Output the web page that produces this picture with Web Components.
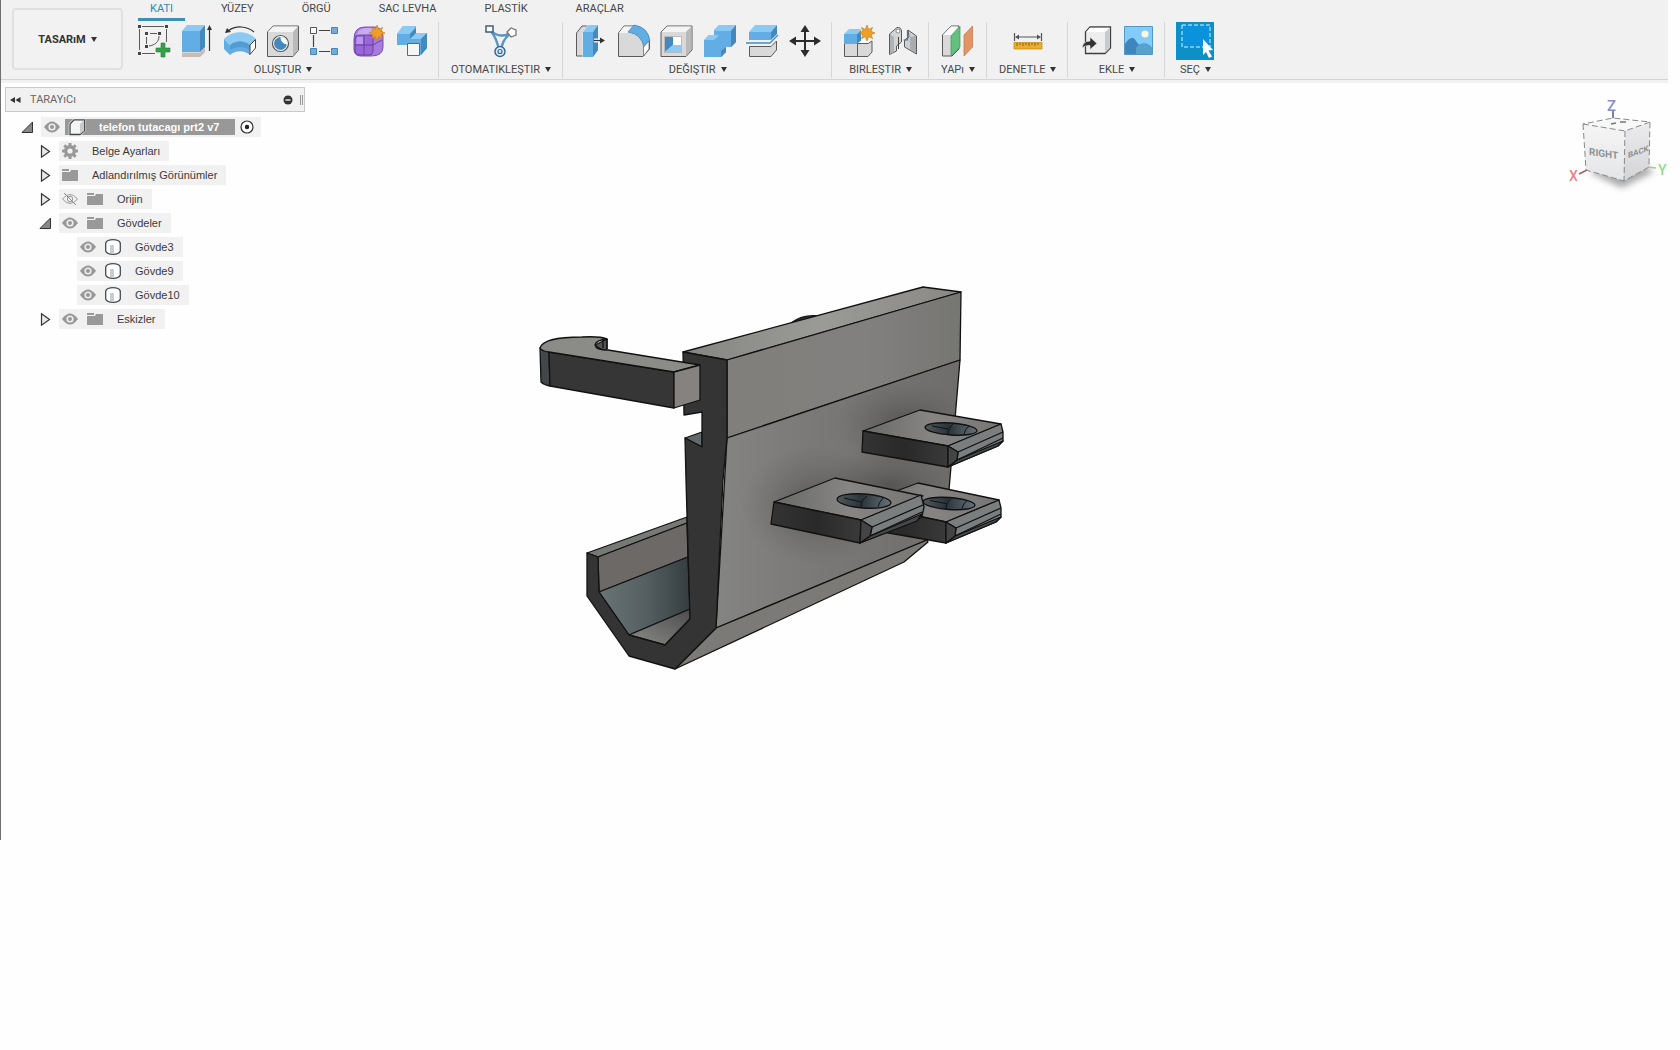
<!DOCTYPE html>
<html lang="tr">
<head>
<meta charset="utf-8">
<title>telefon tutacagı prt2 v7</title>
<style>
body{margin:0;background:#fefefe;color:#3c3c3c;font-family:Roboto,"Liberation Sans",sans-serif;font-size:11px}
</style>
</head>
<body>
<design-app></design-app>
<script>
const define=(name,html,setup)=>customElements.define(name,class extends HTMLElement{
  connectedCallback(){
    if(this.shadowRoot)return;
    const t=document.createElement('template');
    t.innerHTML=typeof html==='function'?html(this):html;
    this.attachShadow({mode:'open'}).append(t.content.cloneNode(true));
    if(setup)setup(this);
  }
});

/* tool icons, drawn on a 32 x 32 grid */
const B='#62aee4',BL='#8ccaf3',BD='#4389bd',G='#d9d9d9',GL='#f4f4f4',GD='#b9b9b9',K='#5b5b5b';
const star='<path d="M0-8 1.7-3.6 5.6-5.6 4-1.7 8 0 4 1.7 5.6 5.6 1.7 3.6 0 8-1.7 3.6-5.6 5.6-4 1.7-8 0-4-1.7-5.6-5.6-1.7-3.6Z" fill="#eda025" stroke="#c7791a" stroke-width=".6"/>';
const ICONS={
sketch:`<g fill="none" stroke="${K}" stroke-width="1"><path d="M4 1.5H26M1.5 4V25M28.5 4V17M4 28.5H17M12 8.5H19M8.5 12V19M21 11C21 17 17 20 11 21"/></g><g fill="#444"><path d="M0 0h3v3H0zM27 0h3v3h-3zM0 27h3v3H0zM7 7h3v3H7zM20 7h3v3h-3zM7 20h3v3H7z"/></g><path d="M23 18h4v5h5v4h-5v5h-4v-5h-5v-4h5z" fill="#34a048" stroke="#24813a" stroke-width=".6"/>`,
extrude:`<path d="M1 27v5h18l5-5v-5H1z" fill="${G}"/><path d="M1 28h18l5-5v4l-5 5H1z" fill="#c7bdb7"/><path d="M1 6h18v21H1z" fill="${B}"/><path d="M1 6 6 0h18l-5 6z" fill="${BL}"/><path d="M19 6 24 0v22l-5 5z" fill="${BD}"/><path d="M28.5 4V26" stroke="#333" stroke-width="1.2"/><path d="M28.5 0 31 5h-5z" fill="#333"/>`,
revolve:`<path d="M0 14C8 5 24 5 32 14L26 20C20 15 12 15 6 20Z" fill="${BL}"/><path d="M0 14 6 20V30L0 24ZM6 20C12 15 20 15 26 20V30C20 25 12 25 6 30Z" fill="${B}"/><path d="M6 20C12 15 20 15 26 20V25C20 21 12 21 6 25Z" fill="${BD}" opacity=".5"/><path d="M26 20 31.500 14.500V23L26 29.500Z" fill="#fff" stroke="#444"/><path d="M4 6C12 0 23 1 30 7" fill="none" stroke="#333" stroke-width="1.200"/><path d="M1 8 3 3 7 7Z" fill="#333"/>`,
hole:`<path d="M.5 7 6 1H31.500V25L26 31.500H.5Z" fill="${G}" stroke="${K}"/><path d="M1 7 6 1.500H31L26 7Z" fill="${GL}"/><path d="M26 7 31 1.500V25L26 31Z" fill="${GD}"/><circle cx="13.500" cy="18.500" r="8" fill="#fff" stroke="#555" stroke-width="1.200"/><circle cx="13.500" cy="18.500" r="6.500" fill="${BD}"/><path d="M13.500 12A7 7 0 0 0 20 19.500 6.500 6.500 0 0 0 13.500 12" fill="#fff"/>`,
pattern:`<path d="M9 5.500H20M3.500 10V22M9 26.500H20" stroke="#444" stroke-width="1.200"/><path d="M.5 2.500h6v6h-6z" fill="#fff" stroke="#555"/><g fill="#70ace0" stroke="#4886b2"><path d="M21.500 2.500h6v6h-6zM.5 23.500h6v6h-6zM21.500 23.500h6v6h-6z"/></g>`,
form:`<path d="M1 14Q1 2 12 2H22Q30 3 30 12V22Q30 31 18 31H8Q1 31 1 24Z" fill="#a77be0" stroke="#7b50b4"/><path d="M4 10Q4 4 13 3H22L20 9Q10 9 4 15Z" fill="#c9a9f2"/><rect x="2" y="10" width="18" height="20" rx="4" fill="#9a67db" stroke="#5d3b91" stroke-width=".8"/><path d="M11 10V30M2 20H20L29 15M20 12 28 6" stroke="#5d3b91" stroke-width=".8" fill="none"/><path d="M4 12h6v7H3z" fill="#bb95ee"/><g transform="translate(24 8)">${star}</g>`,
combine:`<path d="M1 9 7 1H20V8H31V23L25 30H12V20H1Z" fill="${B}"/><path d="M1 9 7 1H20L14 9ZM13 14 19 8H31L25 14Z" fill="${BL}"/><path d="M25 14 31 8V23L25 30ZM14 9 20 3V8L14 14Z" fill="${BD}"/><path d="M11.500 18.500h12v12h-12z" fill="#f6f6f6" stroke="#666"/>`,
automate:`<path d="M5 5C12 12 20 12 26 7M6 6C12 14 13 20 14 25M26 8C18 14 17 20 16 25" fill="none" stroke="#5795c2" stroke-width="2.400"/><path d="M1 1h7v6H1z" fill="#fff" stroke="#3f5f78" stroke-width="1.500"/><path d="M22 7 26 3 31 5 31 10 26 12Z" fill="#fff" stroke="#777" stroke-width="1.300"/><circle cx="15" cy="26.500" r="5" fill="#dcebf5" stroke="#386a8e" stroke-width="1.500"/><circle cx="15" cy="26.500" r="2" fill="none" stroke="#386a8e" stroke-width="1.200"/>`,
presspull:`<path d="M2.500 8 8 1H13V31H2.500Z" fill="${G}" stroke="${K}"/><path d="M8.500 7 13.500 0V32H8.500Z" fill="#f1f1f1"/><path d="M9 7H19V32H9Z" fill="${B}"/><path d="M9 7 14 0H24L19 7Z" fill="${BL}"/><path d="M19 7 24 0V25L19 32Z" fill="${BD}"/><path d="M20 15.500H28" stroke="#f1f1f1" stroke-width="4"/><path d="M20 15.500H27" stroke="#333" stroke-width="1.200"/><path d="M26 12.500 31 15.500 26 18.500Z" fill="#333"/>`,
fillet:`<path d="M1.500 8 7 1H16Q31 3 32.500 18V24L26 31.500H1.500Z" fill="${G}" stroke="${K}"/><path d="M2 8 7 1.500H16L11 8Z" fill="${GL}"/><path d="M11 7 17 0Q31 2 33 16L27 23Q25 9 11 7Z" fill="${B}" stroke="#397daf" stroke-width=".7"/><path d="M26.500 22 32 16V24L26.500 31Z" fill="#fff" stroke="${K}" stroke-width=".7"/>`,
shell:`<path d="M1 7 7 1H32V25L26 31.500H1Z" fill="${G}" stroke="${K}"/><path d="M1.500 7 7 1.500H31.500L26 7Z" fill="${GL}"/><path d="M26 7 31.500 1.500V25L26 31Z" fill="${GD}"/><path d="M4.500 11.500h17v16h-17z" fill="#fff" stroke="#888" stroke-width=".5"/><path d="M5 12H13V20L5 27Z" fill="${BD}"/><path d="M13 20H21V27H5Z" fill="${BL}"/>`,
union:`<path d="M1 15 6 10H11V5L16 0H33V17L28 22H23V27L18 32H1Z" fill="${B}"/><path d="M1 15 6 10H16L11 15ZM11 6 16 0H33L28 6Z" fill="${BL}"/><path d="M28 6 33 0V17L28 22ZM18 26 23 22V27L18 32Z" fill="${BD}"/>`,
split:`<path d="M3 7H25V15H3Z" fill="${B}"/><path d="M3 7 9 0H31L25 7Z" fill="${BL}"/><path d="M25 7 31 0V9L25 15Z" fill="${BD}"/><path d="M0 18H24L32 10" fill="none" stroke="#3f8ec6" stroke-width="1.300"/><path d="M3.500 21.500H25L30.500 16V25L25 31.500H3.500Z" fill="${G}" stroke="${K}"/>`,
move:`<path d="M16 4V28M4 16H28" stroke="#2c2c2c" stroke-width="2"/><path d="M16 0 20.500 7h-9zM16 32l4.500-7h-9zM0 16l7-4.500v9zM32 16l-7-4.500v9z" fill="#2c2c2c"/>`,
newcomp:`<path d="M1.500 18.500H14.500V31.500H1.500ZM14.500 18.500H25L29 16V27L25 31.500H14.500Z" fill="${G}" stroke="${K}"/><path d="M1 9H14V19H1Z" fill="${B}"/><path d="M1 9 6 4H18L14 9Z" fill="${BL}"/><path d="M14 9 18 5V16L14 19Z" fill="${BD}"/><path d="M15 18 19 15H28L25 18Z" fill="#fff"/><g transform="translate(24 8)">${star}</g>`,
joint:`<path d="M3.500 9 11 2.500Q15 2 15.500 6V17L10.500 21V26L3.500 29.500Z" fill="#d4d4d4" stroke="${K}"/><path d="M4 9 8 12V27L4 29Z" fill="#aeb3b6"/><circle cx="12" cy="6" r="2" fill="#fff" stroke="#666" stroke-width=".7"/><path d="M12.500 12V24" stroke="#444"/><path d="M18.500 15 23 12 22 5 30.500 11V29L18.500 22Z" fill="#cfcfcf" stroke="${K}"/><path d="M24 12 30 11V28L24 24Z" fill="#a9adb0"/><path d="M17.500 15H21.500V5" fill="none" stroke="#377ca8" stroke-width="1.200"/>`,
plane:`<path d="M.5 10 9 1H17V24L10 31H.5Z" fill="${G}" stroke="${K}"/><path d="M1 10 9 1.500H16L9 10Z" fill="#fafafa"/><path d="M9 11 18 1.500V22L9 31Z" fill="#63c07e" stroke="#3b9a5a" stroke-width=".7"/><path d="M22 10 30.500 1V22L22 31Z" fill="#e29463" stroke="#b8764c" stroke-width=".7"/>`,
measure:`<path d="M2.500 8V16M29.500 8V16M5 12H27" stroke="#555" stroke-width="1.200"/><path d="M3 12 7 9.500v5zM29 12l-4-2.500v5z" fill="#555"/><path d="M2 17.500H30V24H2Z" fill="#e9ae2e" stroke="#c58e21" stroke-width=".8"/><path d="M5 18v3m3-3v2m3-2v3m3-3v2m3-2v3m3-3v2m3-2v3m3-3v2" stroke="#7d5914" stroke-width=".9"/>`,
insert:`<path d="M6.500 7 11 2H31.500V23L26 28.500H6.500Z" fill="#eeeeef" stroke="#3f3f3f" stroke-width="1.300"/><path d="M7 7 11 2.700H31L26 7Z" fill="#fff"/><path d="M26 7 31 2.700V23L26 28Z" fill="#c8cbd0"/><path d="M3 23Q4 16 11 16V12L18 18.500 11 24.500V20.500Q6 20 3 23Z" fill="#333" stroke="#f1f1f1" stroke-width=".6"/>`,
picture:`<path d="M2.500 1.500h28v28h-28z" fill="#82ccfb" stroke="#5598c5"/><path d="M3 19Q10 8 14 16 18 22 20 21 23 15 30 23V29H3Z" fill="#3e86bd"/><path d="M14 23Q21 13 30 24V29H14Z" fill="#5aa1d2"/><circle cx="23" cy="9" r="3.500" fill="#fff6dc"/>`,
select:`<path d="M3 0H31V22H3Z" fill="#0a92dc" stroke="#d9f1fb" stroke-dasharray="4 2"/><path d="M24 14 34 25 29.500 25.500 33 31.500 30 33 27 27 24 30Z" fill="#fff"/>`
};
define('tool-button',h=>`<style>
:host{display:block}
button{display:grid;place-items:center;width:32px;height:38px;padding:0;border:0;background:none}
svg{display:block;width:32px;height:32px;overflow:visible}
:host([active]) button{width:38px;background:#0d90c8}
</style><button type="button" aria-label="${h.getAttribute('label')}"><svg viewBox="0 0 32 32" aria-hidden="true">${ICONS[h.getAttribute('icon')]}</svg></button>`);

define('tool-group',h=>`<style>
:host{display:flex;flex-direction:column;align-items:center;padding:0 10px 0 11px;border-right:1px solid #d6d6d6;height:56px}
:host([first]){padding-left:0}
:host([last]){border:0}
.row{display:flex;gap:11px}
.menu{display:flex;align-items:center;gap:5px;height:18px;padding:0 1px;border:0;background:none;font:inherit;color:#464646;white-space:nowrap}
.menu::after{content:"";border:3px solid transparent;border-top:5px solid #333;border-bottom:0}
</style><div class="row"><slot></slot></div><button class="menu" type="button">${h.getAttribute('label')}</button>`);

define('ribbon-tab',`<style>
:host{display:block}
a{display:block;height:18px;line-height:18px;padding:0 12px;border-bottom:3px solid transparent;color:#464646;text-decoration:none;font-size:11px;white-space:nowrap}
:host([current]) a{color:#2d88b4;border-color:#3d8fb8}
</style><a href="#"><slot></slot></a>`);

const group=(label,tools,attr='')=>`<tool-group label="${label}" ${attr}>${tools.map(([i,l])=>`<tool-button icon="${i}" label="${l}" ${i==='select'?'active':''}></tool-button>`).join('')}</tool-group>`;
define('design-ribbon',`<style>
:host{display:block;background:#f1f1f1;padding-bottom:3px}
.bar{display:flex;border-bottom:1px solid #d4d4d4;padding-left:11px;height:79px}
.space{align-self:flex-start;margin-top:8px;width:111px;height:62px;border:2px solid #e0e0e0;border-radius:4px;background:#f2f2f2;display:flex;align-items:center;justify-content:center;gap:5px;font:bold 11px Roboto,sans-serif;color:#333;padding:0;box-sizing:border-box}
.space::after{content:"";border:3px solid transparent;border-top:5px solid #333;border-bottom:0}
.main{margin-left:15px}
nav{display:flex;gap:24px}
.groups{display:flex;margin-top:1px}
</style><div class="bar"><button class="space" type="button">TASARıM</button><div class="main">
<nav><ribbon-tab current>KATI</ribbon-tab><ribbon-tab>YÜZEY</ribbon-tab><ribbon-tab>ÖRGÜ</ribbon-tab><ribbon-tab>SAC LEVHA</ribbon-tab><ribbon-tab>PLASTİK</ribbon-tab><ribbon-tab>ARAÇLAR</ribbon-tab></nav>
<div class="groups">
${group('OLUŞTUR',[['sketch','Eskiz'],['extrude','Ekstrüzyon'],['revolve','Döndür'],['hole','Delik'],['pattern','Desen'],['form','Form'],['combine','Türet']],'first')}
${group('OTOMATIKLEŞTIR',[['automate','Otomatik']])}
${group('DEĞIŞTIR',[['presspull','Bas Çek'],['fillet','Radyus'],['shell','Kabuk'],['union','Birleşim'],['split','Böl'],['move','Taşı']])}
${group('BIRLEŞTIR',[['newcomp','Yeni Bileşen'],['joint','Bağlantı']])}
${group('YAPı',[['plane','Düzlem']])}
${group('DENETLE',[['measure','Ölç']])}
${group('EKLE',[['insert','Türetilmiş'],['picture','Resim']])}
${group('SEÇ',[['select','Seç']],'last')}
</div></div></div>`);

/* browser tree */
const TI={
eye:`<path d="M0 8Q8-3 16 8 8 19 0 8Z" fill="#989898"/><circle cx="8" cy="8" r="3.600" fill="#eee"/><circle cx="8" cy="8" r="2" fill="#989898"/>`,
hidden:`<path d="M.5 8Q8-1 15.500 8 8 17 .5 8Z" fill="none" stroke="#999"/><circle cx="8" cy="8" r="2.700" fill="none" stroke="#999"/><path d="M2 2 14 14" stroke="#888"/>`,
folder:`<path d="M0 2H7V4H0ZM0 5H8L9 3H16V14H0Z" fill="#999"/>`,
gear:`<circle cx="8" cy="8" r="4.300" fill="none" stroke="#999" stroke-width="3.400"/><path d="M8 0V3M8 13V16M0 8H3M13 8H16M2.300 2.300 4.500 4.500M11.500 11.500 13.700 13.700M2.300 13.700 4.500 11.500M11.500 4.500 13.700 2.300" stroke="#999" stroke-width="3"/>`,
part:`<path d="M1 5 5 1H15V12L11 15.500H1Z" fill="#eef1f3" stroke="#fff" stroke-width="2.500"/><path d="M1 5 5 .8H15.300V12L11 15.500H1Z" fill="#f3f5f6" stroke="#444" stroke-width="1.300"/><path d="M11 5 15 1V12L11 15Z" fill="#c7cbce"/>`,
body:`<path d="M.7 4Q2 .7 8 .7T15.300 4V12Q14 15.300 8 15.300T.7 12Z" fill="#fff" stroke="#434b55" stroke-width="1.300"/><path d="M5 6H9V14H5Z" fill="#c9cdd0"/>`
};
const ti=n=>`<svg viewBox="0 0 16 16" width="16" height="16" aria-hidden="true">${TI[n]}</svg>`;
define('tree-node',h=>{
  const eye=h.getAttribute('eye'),st=h.getAttribute('state');
  const tog=st==='open'?'<path d="M11.500 1V11.500H1Z" fill="#888" stroke="#333"/>':'<path d="M2.500.8 10.500 6.500 2.500 12.200Z" fill="#e8e8e8" stroke="#333" stroke-width="1.200"/>';
  return `<style>
:host{display:flex;align-items:center;gap:8px;height:20px;font:11px "Liberation Sans",Arial,sans-serif;color:#3a3a3a}
:host([depth="1"]){padding-left:18px}:host([depth="2"]){padding-left:36px}
button{display:block;padding:0;border:0;background:none;flex:none}
svg{display:block;overflow:visible}
.t{width:12px;height:13px}
.box{display:flex;align-items:center;gap:9px;height:20px;background:#f1f1f1;padding:0 9px 0 3px}
.name{display:flex;align-items:center;gap:14px;height:20px;white-space:nowrap}
:host([root]) .box{gap:5px;padding-right:7px}
:host([root]) .name{font-weight:bold;color:#fff;background:#989898;height:16px;padding:0 16px 0 4px}
</style><span class="t">${st?`<button type="button" aria-label="Genişlet"><svg width="12" height="13">${tog}</svg></button>`:''}</span>
<div class="box">${eye?`<button type="button" aria-label="Görünürlük">${ti(eye)}</button>`:''}<span class="name">${ti(h.getAttribute('icon'))}<slot></slot></span>${h.hasAttribute('root')?`<svg width="14" height="14"><circle cx="7" cy="7" r="6" fill="#fff" stroke="#333" stroke-width="1.200"/><circle cx="7" cy="7" r="2.200" fill="#222"/></svg>`:''}</div>`});

define('browser-panel',`<style>
:host{display:block;width:300px}
header{display:flex;align-items:center;height:25px;box-sizing:border-box;border:1px solid #c9c9c9;background:#f1f1f1;color:#666;padding:0 1px 0 4px}
button{display:block;padding:0;border:0;background:none}
svg{display:block}
h2{margin:0 auto 0 9px;font:11px Roboto,sans-serif}
.grip{margin-left:7px;width:1px;height:10px;border:solid #999;border-width:0 1px}
.tree{display:flex;flex-direction:column;gap:4px;padding:5px 0 0 16px;align-items:flex-start}
</style><header><button type="button" aria-label="Daralt"><svg width="11" height="8"><path d="M0 4 5 1V7ZM5.500 4 10.500 1V7Z" fill="#333"/></svg></button><h2>TARAYıCı</h2><button type="button" aria-label="Gizle"><svg width="10" height="10"><circle cx="5" cy="5" r="4.500" fill="#333"/><path d="M2.500 5h5" stroke="#fff" stroke-width="1.300"/></svg></button><span class="grip"></span></header>
<div class="tree">
<tree-node root state="open" eye="eye" icon="part">telefon tutacagı prt2 v7</tree-node>
<tree-node depth="1" state="closed" icon="gear">Belge Ayarları</tree-node>
<tree-node depth="1" state="closed" icon="folder">Adlandırılmış Görünümler</tree-node>
<tree-node depth="1" state="closed" eye="hidden" icon="folder">Orijin</tree-node>
<tree-node depth="1" state="open" eye="eye" icon="folder">Gövdeler</tree-node>
<tree-node depth="2" eye="eye" icon="body">Gövde3</tree-node>
<tree-node depth="2" eye="eye" icon="body">Gövde9</tree-node>
<tree-node depth="2" eye="eye" icon="body">Gövde10</tree-node>
<tree-node depth="1" state="closed" eye="eye" icon="folder">Eskizler</tree-node>
</div>`);

define('view-cube',`<style>:host{display:block}svg{display:block;font-family:Roboto,sans-serif}</style>
<svg width="104" height="110" viewBox="1568 84 104 110" role="img" aria-label="Görünüm küpü">
<defs><filter id="s" x="-30%" y="-60%" width="160%" height="220%"><feGaussianBlur stdDeviation="3"/></filter>
<linearGradient id="f" x2="0" y2="1"><stop stop-color="#f5f5f5"/><stop offset="1" stop-color="#e4e5e7"/></linearGradient>
<linearGradient id="g" x2="0" y2="1"><stop stop-color="#ececee"/><stop offset="1" stop-color="#d3d4d6"/></linearGradient></defs>
<path d="M1588 172 1622 188 1654 172 1640 162Z" fill="#999" opacity=".8" filter="url(#s)"/>
<path d="M1613 111V119" stroke="#55557f" stroke-width="1.500"/><path d="M1579 174 1587 170" stroke="#a65d5d" stroke-width="1.500"/><path d="M1648 167 1656 168" stroke="#9ad09a" stroke-width="1.500"/>
<path d="M1583 124 1625 131 1624 181 1586 170Z" fill="url(#f)"/><path d="M1625 131 1650 122 1649 167 1624 181Z" fill="url(#g)"/><path d="M1583 124 1613 118 1650 122 1625 131Z" fill="#f8f8f8"/>
<path d="M1583 124 1625 131 1650 122 1613 118ZM1583 124 1586 170 1624 181 1649 167 1650 122M1625 131 1624 181" fill="none" stroke="#888" stroke-dasharray="6 3"/>
<path d="M1611 124 1616 123M1620 122 1626 122" stroke="#777" stroke-width="1.500"/>
<text x="1607" y="111" font-size="15" font-weight="500" fill="#8a8ec6">Z</text>
<text x="1569" y="181" font-size="14" font-weight="500" fill="#e88686">X</text><text x="1658" y="175" font-size="14" font-weight="500" fill="#8fdb8f">Y</text>
<text transform="translate(1589 155) skewY(8)" font-size="10" font-weight="bold" fill="#909294">RIGHT</text>
<text transform="translate(1628 158) skewY(-19)" font-size="8" font-weight="bold" fill="#909294">BACK</text>
</svg>`);

/* a mounting lug; dy raises the rear edge of its top face */
const lug=(dy=0)=>`<path d="M863 ${431-dy} 920 ${410-dy} 1001 424 948 446Z" fill="url(#lt)"/><path d="M863 ${431-dy} 948 446 948 467 862 452Z" fill="url(#ld)"/><path d="M948 446 1001 424 1003 432 1003 441 998 446 948 467 957 460 958 452Z" fill="#7a7e7e"/><path d="M957 460 1003 441 998 446 948 467Z" fill="#45494a"/><path d="M948 446 958 452 957 460 948 467Z" fill="#444"/><path d="M958 452 1003 432M957 460 1003 438" fill="none"/><g transform="translate(0 ${-dy/2})"><ellipse cx="951" cy="429" rx="26" ry="6" transform="rotate(4 951 429)" fill="url(#sl)"/><path d="M953 424Q948 428 948 435M969 426Q965 429 964 434M932 426 948 429" fill="none" stroke-width="1"/></g>`;
define('model-view',`<style>:host{display:block}svg{display:block;width:100%;height:100%}</style>
<svg role="img" aria-label="Telefon tutacağı modeli"><defs>
<linearGradient id="b1"><stop stop-color="#807f7b"/><stop offset=".6" stop-color="#82807e"/><stop offset="1" stop-color="#767673"/></linearGradient>
<linearGradient id="b2"><stop stop-color="#848482"/><stop offset=".4" stop-color="#7b7977"/><stop offset="1" stop-color="#6e6d6b"/></linearGradient>
<linearGradient id="tp"><stop stop-color="#858581"/><stop offset=".5" stop-color="#9a9a96"/><stop offset="1" stop-color="#8a8986"/></linearGradient>
<linearGradient id="tr"><stop stop-color="#697476"/><stop offset=".5" stop-color="#566062"/><stop offset="1" stop-color="#353d40"/></linearGradient>
<linearGradient id="lt"><stop stop-color="#696968"/><stop offset=".5" stop-color="#868583"/><stop offset="1" stop-color="#777674"/></linearGradient>
<linearGradient id="ld"><stop stop-color="#343434"/><stop offset=".5" stop-color="#292929"/><stop offset="1" stop-color="#3a3a3a"/></linearGradient>
<linearGradient id="sl"><stop stop-color="#53595c"/><stop offset=".45" stop-color="#29343a"/><stop offset="1" stop-color="#66727a"/></linearGradient>
<linearGradient id="fl" x1="0" y1="1" x2="1" y2="0"><stop stop-color="#8b8b89"/><stop offset="1" stop-color="#4c4c4c"/></linearGradient>
<radialGradient id="sh"><stop stop-color="#383736" stop-opacity=".5"/><stop offset="1" stop-color="#555" stop-opacity="0"/></radialGradient>
<clipPath id="wall"><path d="M727 438 960 360 949 490 927 540 716 628Z"/></clipPath></defs>
<g transform="translate(-1 -83)" stroke="#111" stroke-width="1.300" stroke-linejoin="round">
<path d="M587 553 687 517V523L598 557Z" fill="#777976"/><path d="M598 557 687 523 688 557 599 592Z" fill="#6d6967"/><path d="M599 592 688 557 690 609 629 635Z" fill="url(#tr)"/><path d="M629 635 690 609V619L665 645Z" fill="url(#fl)"/>
<path d="M791 323Q803 314 819 316Z" fill="#333"/>
<path d="M683 352 923 287 961 292 727 360Z" fill="url(#tp)"/>
<path d="M727 360 961 292 960 360 727 438Z" fill="url(#b1)"/>
<path d="M727 438 960 360 949 490 927 540 716 628Z" fill="url(#b2)"/>
<g clip-path="url(#wall)" stroke="none" fill="url(#sh)"><ellipse cx="905" cy="425" rx="70" ry="45"/><ellipse cx="815" cy="505" rx="75" ry="60"/><ellipse cx="890" cy="485" rx="70" ry="40"/></g>
<path d="M716 628 927 540 928 542 904 562 675 669Z" fill="#7b7a76"/>
<path d="M685 438 702 432V447Z" fill="#62686b"/>
<path d="M683 352 727 360 727 438 723 480 716 628 675 669 629 656 587 596 587 553 598 557 599 592 629 635 665 645 690 619 686 480 685 438 702 447 702 412 684 415Z" fill="#343434"/>
<path d="M595 345 607 339V349L603 351Z" fill="#555"/>
<path d="M540 348 541 382Q544 385 550 386L549 352Q542 351 540 348Z" fill="#444747"/>
<path d="M549 352 674 372V408L550 386Z" fill="#363636"/>
<path d="M540 348C542 341 556 337 582 337Q600 336 607 339 596 340 595 345 596 350 608 350L700 365 674 372 549 352Q542 351 540 348Z" fill="#8b8b87"/>
<path d="M603 340V348M607 339V349" fill="none"/>
<path d="M674 372 700 365V400L674 408Z" fill="#85827f"/>
<g>${lug()}</g><g transform="translate(-2 76)">${lug(3)}</g>
<path d="M774 502 835 478 923 496 861 520Z" fill="url(#lt)"/><path d="M774 502 861 520 860 543 771 524Z" fill="url(#ld)"/><path d="M861 520 921 495 924 507 922 516 916 521 860 543 870 536 872 527Z" fill="#7a7e7e"/><path d="M870 536 922 514 917 521 860 543Z" fill="#45494a"/><path d="M861 520 872 527 870 536 860 543Z" fill="#444"/><path d="M872 527 923 505M870 536 922 512" fill="none"/><ellipse cx="864" cy="501" rx="27" ry="7" transform="rotate(4 864 501)" fill="url(#sl)"/><path d="M867 496Q861 500 861 507M883 498Q879 502 878 507M844 498 861 502" fill="none" stroke-width="1"/>
</g></svg>`);

define('design-app',`<style>
:host{display:flex;flex-direction:column;box-sizing:border-box;height:80vh;min-height:700px;margin-right:12px;border-left:1px solid #707070}
.view{position:relative;flex:1;display:flex;justify-content:space-between;align-items:flex-start}
model-view{position:absolute;inset:0}
browser-panel{position:relative;margin:4px 0 0 4px}
view-cube{position:relative;margin:1px -4px 0 0}
</style><design-ribbon></design-ribbon><div class="view"><model-view></model-view><browser-panel></browser-panel><view-cube></view-cube></div>`);
</script>
</body>
</html>
